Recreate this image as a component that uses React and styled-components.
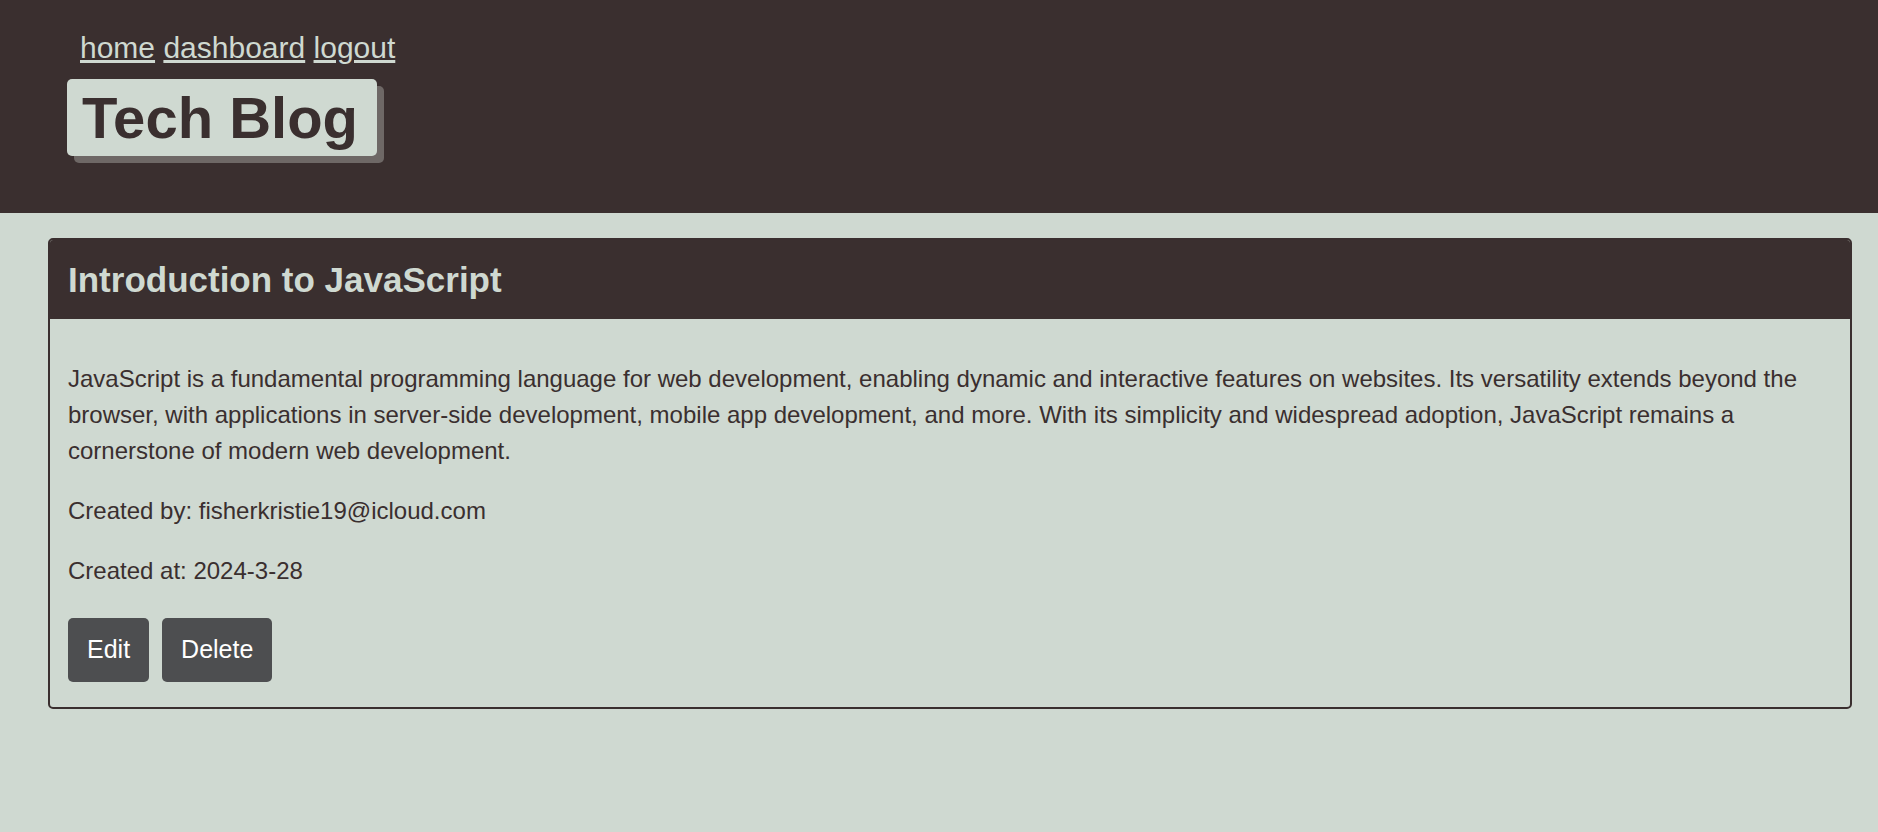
import React from "react";
import styled, { createGlobalStyle } from "styled-components";

const GlobalStyle = createGlobalStyle`
  html, body {
    margin: 0;
    padding: 0;
    background: #cfd9d1;
    font-family: "Liberation Sans", Arial, sans-serif;
    color: #3a2f2f;
  }
`;

const Page = styled.div`
  min-height: 100vh;
  display: flex;
  flex-direction: column;
`;

const Header = styled.header`
  background: #3a2f2f;
  padding: 31px 0 57px 67px;
  display: flex;
  flex-direction: column;
  align-items: flex-start;
  gap: 14px;
`;

const Nav = styled.nav`
  margin-left: 13px;
  font-size: 30px;
  line-height: normal;
`;

const NavLink = styled.a`
  color: #cfd9d1;
  text-decoration: underline;
  cursor: pointer;
`;

const Logo = styled.h1`
  margin: 0;
  padding: 5px 19px 5px 15px;
  font-size: 58px;
  font-weight: 700;
  line-height: normal;
  color: #3a2f2f;
  background: #cfd9d1;
  border-radius: 5px;
  box-shadow: 7px 7px 0 #6e6866;
`;

const Main = styled.main`
  padding: 25px 26px 40px 48px;
`;

const Card = styled.article`
  border: 2px solid #3a2f2f;
  border-radius: 5px;
  overflow: hidden;
`;

const CardHeader = styled.div`
  background: #3a2f2f;
  padding: 19px 18px;
`;

const CardTitle = styled.h2`
  margin: 0;
  font-size: 35px;
  font-weight: 700;
  line-height: 41px;
  color: #cfd9d1;
`;

const CardBody = styled.div`
  padding: 18px;
  font-size: 24px;
  line-height: 36px;
`;

const Text = styled.p`
  margin: 24px 0;
`;

const Actions = styled.div`
  display: flex;
  gap: 13px;
  margin: 29px 0 7px;
`;

const Button = styled.button`
  background: #4d4e50;
  color: #ffffff;
  border: none;
  border-radius: 5px;
  padding: 17px 19px 18px;
  font-family: "Liberation Sans", Arial, sans-serif;
  font-size: 25px;
  line-height: 29px;
  cursor: pointer;
`;

const post = {
  title: "Introduction to JavaScript",
  body:
    "JavaScript is a fundamental programming language for web development, enabling dynamic and interactive features on websites. Its versatility extends beyond the browser, with applications in server-side development, mobile app development, and more. With its simplicity and widespread adoption, JavaScript remains a cornerstone of modern web development.",
  author: "fisherkristie19@icloud.com",
  date: "2024-3-28",
};

const App = () => {
  return (
    <Page>
      <GlobalStyle />
      <Header>
        <Nav>
          <NavLink href="#">home</NavLink> <NavLink href="#">dashboard</NavLink>{" "}
          <NavLink href="#">logout</NavLink>
        </Nav>
        <Logo>Tech Blog</Logo>
      </Header>
      <Main>
        <Card>
          <CardHeader>
            <CardTitle>{post.title}</CardTitle>
          </CardHeader>
          <CardBody>
            <Text>{post.body}</Text>
            <Text>Created by: {post.author}</Text>
            <Text>Created at: {post.date}</Text>
            <Actions>
              <Button>Edit</Button>
              <Button>Delete</Button>
            </Actions>
          </CardBody>
        </Card>
      </Main>
    </Page>
  );
};

export default App;
